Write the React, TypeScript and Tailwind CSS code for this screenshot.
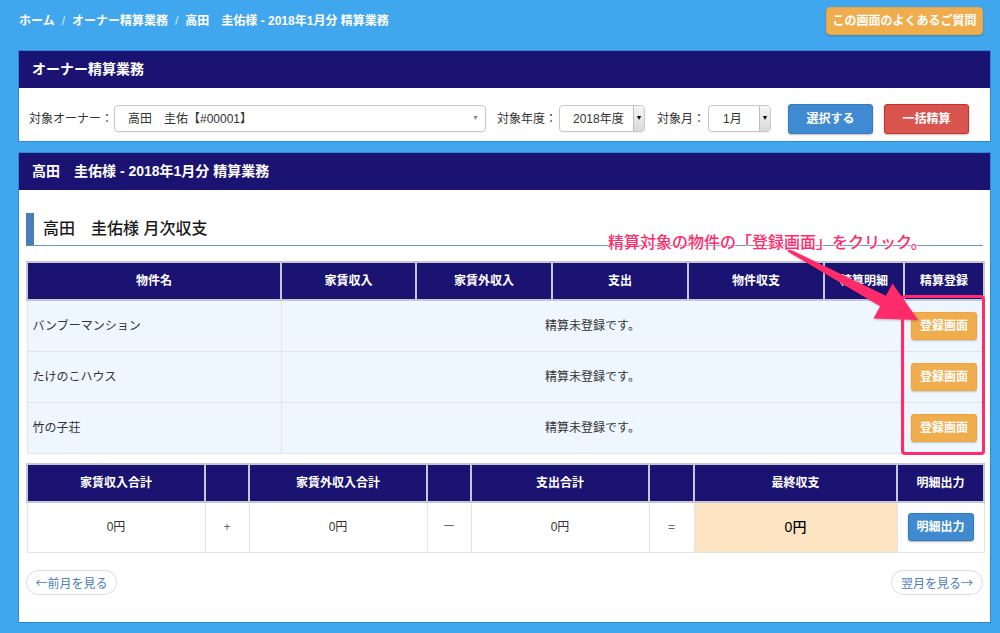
import type { ReactNode } from "react";

const properties = ["バンブーマンション", "たけのこハウス", "竹の子荘"];

const headCell = "border-2 border-[#c6c7d4] bg-[#1b1372] text-white font-bold text-[12px] text-center h-[38px] p-0";
const bodyCell = "border border-[#e1e3e8] text-[12px] text-[#333] p-0";

function SelectBox({ width, text, pad, native }: { width: string; text: string; pad: string; native?: boolean }) {
  return (
    <div className={`${width} h-[27px] shrink-0 flex items-center rounded-[4px] border border-[#c8c8c8] bg-white shadow-[0_1px_1px_rgba(0,0,0,0.06)] overflow-hidden`}>
      <span className={`flex-1 ${pad} text-[12px] text-[#333]`}>{text}</span>
      {native ? (
        <span className="w-[11px] h-full flex items-center justify-center bg-gradient-to-b from-[#f6f6f6] to-[#d9d9d9] border-l border-[#bdbdbd] shadow-[1px_1px_0_#777] text-[7px] text-black">▼</span>
      ) : (
        <span className="pr-[6px] text-[7px] text-[#888]">▼</span>
      )}
    </div>
  );
}

function PanelHeader({ children }: { children: ReactNode }) {
  return <div className="h-[37px] bg-[#1b1372] px-[13px] flex items-center text-white font-bold text-[14px]">{children}</div>;
}

export default function App() {
  return (
    <div className="min-h-[633px] bg-[#40a6ee] pl-[18px] pr-[9px] pt-[7px] pb-[12px] font-['Liberation_Sans','Noto_Sans_CJK_JP',sans-serif]">
      {/* breadcrumb */}
      <div className="h-[28px] flex items-center justify-between">
        <div className="pl-[1px] text-[12px] font-bold text-white flex items-center gap-[7px]">
          <span>ホーム</span>
          <span className="text-[#d6ecfc] font-normal">/</span>
          <span>オーナー精算業務</span>
          <span className="text-[#d6ecfc] font-normal">/</span>
          <span>高田　圭佑様 - 2018年1月分 精算業務</span>
        </div>
        <button type="button" className="mr-[8px] w-[157px] h-[28px] rounded-[4px] bg-[#f0ad4e] border border-[#eea43c] text-white font-bold text-[12px] shadow-[0_1px_2px_rgba(0,0,0,0.2)]">
          この画面のよくあるご質問
        </button>
      </div>

      {/* owner panel */}
      <div className="mt-[15px] border border-[#2b8ad8] bg-white">
        <PanelHeader>オーナー精算業務</PanelHeader>
        <div className="h-[53px] pt-[8px] pl-[10px] flex items-center text-[12px] text-[#333]">
          <span className="w-[85px] shrink-0">対象オーナー：</span>
          <SelectBox width="w-[372px]" text="高田　圭佑【#00001】" pad="pl-[13px]" />
          <span className="ml-[11px] w-[62px] shrink-0">対象年度：</span>
          <SelectBox width="w-[86px]" text="2018年度" pad="pl-[13px]" native />
          <span className="ml-[12px] w-[51px] shrink-0">対象月：</span>
          <SelectBox width="w-[63px]" text="1月" pad="pl-[14px]" native />
          <button type="button" className="ml-[17px] w-[85px] h-[30px] shrink-0 rounded-[3px] bg-[#3f8ad0] border border-[#3479bd] text-white font-bold text-[12px] shadow-[0_1px_2px_rgba(0,0,0,0.25)]">
            選択する
          </button>
          <button type="button" className="ml-[11px] w-[85px] h-[30px] shrink-0 rounded-[3px] bg-[#d9534f] border border-[#c9302c] text-white font-bold text-[12px] shadow-[0_1px_2px_rgba(0,0,0,0.25)]">
            一括精算
          </button>
        </div>
      </div>

      {/* monthly panel */}
      <div className="mt-[10px] border border-[#2b8ad8] bg-white">
        <PanelHeader>高田　圭佑様 - 2018年1月分 精算業務</PanelHeader>
        <div className="relative px-[7px] pt-[23px] pb-[27px]">
          <div className="h-[33px] flex items-center border-l-[8px] border-l-[#4a7ebb] border-b border-b-[#6f95c6] pl-[9px] text-[16px] font-medium text-[#1a1a1a]">
            高田　圭佑様 月次収支
          </div>

          <table className="mt-[15px] w-[957px] table-fixed border-collapse">
            <colgroup>
              <col className="w-[254px]" />
              <col className="w-[135px]" />
              <col className="w-[136px]" />
              <col className="w-[136px]" />
              <col className="w-[136px]" />
              <col className="w-[80px]" />
              <col className="w-[80px]" />
            </colgroup>
            <thead>
              <tr>
                {["物件名", "家賃収入", "家賃外収入", "支出", "物件収支", "精算明細", "精算登録"].map((h) => (
                  <th key={h} className={headCell}>{h}</th>
                ))}
              </tr>
            </thead>
            <tbody>
              {properties.map((name) => (
                <tr key={name} className="h-[51px] bg-[#eef6ff]">
                  <td className={`${bodyCell} pl-[5px]`}>{name}</td>
                  <td colSpan={5} className={`${bodyCell} text-center`}>精算未登録です。</td>
                  <td className={`${bodyCell} text-center`}>
                    <button type="button" className="w-[66px] h-[28px] rounded-[3px] bg-[#f0ad4e] border border-[#eea43c] text-white font-bold text-[12px] shadow-[0_1px_2px_rgba(0,0,0,0.2)]">
                      登録画面
                    </button>
                  </td>
                </tr>
              ))}
            </tbody>
          </table>

          <table className="mt-[9px] w-[957px] table-fixed border-collapse">
            <colgroup>
              <col className="w-[178px]" />
              <col className="w-[44px]" />
              <col className="w-[178px]" />
              <col className="w-[44px]" />
              <col className="w-[178px]" />
              <col className="w-[45px]" />
              <col className="w-[203px]" />
              <col className="w-[87px]" />
            </colgroup>
            <thead>
              <tr>
                <th className={headCell}>家賃収入合計</th>
                <th className={headCell}></th>
                <th className={headCell}>家賃外収入合計</th>
                <th className={headCell}></th>
                <th className={headCell}>支出合計</th>
                <th className={headCell}></th>
                <th className={headCell}>最終収支</th>
                <th className={headCell}>明細出力</th>
              </tr>
            </thead>
            <tbody>
              <tr className="h-[51px]">
                <td className={`${bodyCell} text-center`}>0円</td>
                <td className={`${bodyCell} text-center text-[#666]`}>+</td>
                <td className={`${bodyCell} text-center`}>0円</td>
                <td className={`${bodyCell} text-center text-[#666]`}>ー</td>
                <td className={`${bodyCell} text-center`}>0円</td>
                <td className={`${bodyCell} text-center text-[#666]`}>=</td>
                <td className={`${bodyCell} text-center bg-[#fde4c2] text-[14px] font-medium text-black`}>0円</td>
                <td className={`${bodyCell} text-center`}>
                  <button type="button" className="w-[66px] h-[28px] rounded-[3px] bg-[#3f8ad0] border border-[#3479bd] text-white font-bold text-[12px] shadow-[0_1px_2px_rgba(0,0,0,0.3)]">
                    明細出力
                  </button>
                </td>
              </tr>
            </tbody>
          </table>

          <div className="mt-[17px] flex justify-between">
            <button type="button" className="w-[91px] h-[25px] rounded-full border border-[#dcdcdc] bg-white text-[12px] text-[#4a7ebb] font-['Noto_Sans_CJK_JP',sans-serif]">
              ←前月を見る
            </button>
            <button type="button" className="w-[92px] h-[25px] rounded-full border border-[#dcdcdc] bg-white text-[12px] text-[#4a7ebb] font-['Noto_Sans_CJK_JP',sans-serif]">
              翌月を見る→
            </button>
          </div>

          {/* annotation overlay */}
          <svg className="absolute left-0 top-0 pointer-events-none" width="971" height="431">
            <g transform="translate(-19,-190)">
              <polygon
                points="788.7,248.7 885.9,295.7 892.6,283.5 918,320 873.4,318.5 880.1,306.3 787.3,251.3"
                fill="#ff2b6b"
                style={{ filter: "drop-shadow(1px 1px 1px rgba(0,0,0,0.25))" }}
              />
            </g>
          </svg>
          <div className="absolute left-[882px] top-[105px] w-[84px] h-[160px] rounded-[4px] border-[3px] border-[#ff2b6b] pointer-events-none" />
          <div className="absolute left-[589px] top-[43px] text-[16px] leading-[20px] font-medium text-[#ff2b6b] [text-shadow:0_0_2px_#fff,0_0_2px_#fff,0_0_2px_#fff]">
            精算対象の物件の「登録画面」をクリック。
          </div>
        </div>
      </div>
    </div>
  );
}
